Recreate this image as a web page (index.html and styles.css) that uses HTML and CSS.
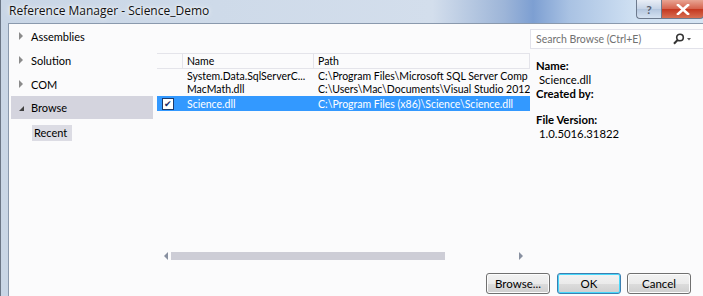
FILE: index.html
```html
<!DOCTYPE html>
<html lang="en">
<head>
    <meta charset="UTF-8">
    <title>Reference Manager - Science_Demo</title>
    <link rel="stylesheet" href="styles.css">
</head>
<body>
    <div class="window">
        <div class="titlebar">
            <span class="title">Reference Manager - Science_Demo</span>
            <div class="caption-buttons">
                <span class="cap help">?</span>
                <span class="cap close">
                    <svg width="14" height="11" viewBox="0 0 14 11">
                        <path d="M2 1 L12 10 M12 1 L2 10" stroke="#fff" stroke-width="2.6" stroke-linecap="square"/>
                    </svg>
                </span>
            </div>
        </div>

        <div class="frame">
            <div class="client">
                <!-- navigation -->
                <div class="nav">
                    <div class="nav-item"><span class="arrow closed"></span>Assemblies</div>
                    <div class="nav-item"><span class="arrow closed"></span>Solution</div>
                    <div class="nav-item"><span class="arrow closed"></span>COM</div>
                    <div class="nav-item selected"><span class="arrow open"></span>Browse</div>
                    <div class="nav-sub"><span class="recent">Recent</span></div>
                </div>

                <!-- list of references -->
                <div class="list-pane">
                    <div class="list">
                        <div class="row header">
                            <div class="cell check"></div>
                            <div class="cell name">Name</div>
                            <div class="cell path">Path</div>
                        </div>
                        <div class="row">
                            <div class="cell check"></div>
                            <div class="cell name">System.Data.SqlServerC...</div>
                            <div class="cell path">C:\Program Files\Microsoft SQL Server Comp</div>
                        </div>
                        <div class="row">
                            <div class="cell check"></div>
                            <div class="cell name">MacMath.dll</div>
                            <div class="cell path">C:\Users\Mac\Documents\Visual Studio 2012</div>
                        </div>
                        <div class="row selected">
                            <div class="cell check"><span class="checkbox">&#10004;</span></div>
                            <div class="cell name">Science.dll</div>
                            <div class="cell path">C:\Program Files (x86)\Science\Science.dll</div>
                        </div>
                    </div>
                    <div class="hscroll">
                        <span class="sarrow left"></span>
                        <div class="track"><div class="thumb"></div></div>
                        <span class="sarrow right"></span>
                    </div>
                </div>

                <!-- details -->
                <div class="details">
                    <div class="search">
                        <span class="search-text">Search Browse (Ctrl+E)</span>
                        <svg class="search-icon" width="20" height="12" viewBox="0 0 20 12">
                            <circle cx="8" cy="4.5" r="3.3" fill="none" stroke="#333" stroke-width="1.6"/>
                            <path d="M5.8 6.8 L2 10.8" stroke="#333" stroke-width="2"/>
                            <path d="M15 5 L19 5 L17 7.5 Z" fill="#555"/>
                        </svg>
                    </div>
                    <div class="info">
                        <div class="label">Name:</div>
                        <div class="value">Science.dll</div>
                        <div class="label">Created by:</div>
                        <div class="value empty"></div>
                        <div class="label">File Version:</div>
                        <div class="value">1.0.5016.31822</div>
                    </div>
                </div>
            </div>

            <div class="buttons">
                <button class="btn">Browse...</button>
                <button class="btn default">OK</button>
                <button class="btn">Cancel</button>
            </div>
        </div>
    </div>
</body>
</html>
```

FILE: styles.css
```css
* {
    box-sizing: border-box;
    margin: 0;
    padding: 0;
}

body {
    width: 703px;
    height: 296px;
    overflow: hidden;
    font-family: Lato, "Open Sans", sans-serif;
    font-size: 10.5px;
    color: #000;
    background: #fff;
}

.window {
    width: 720px;
    height: 296px;
    background: linear-gradient(90deg, #c9d6e6 0%, #d3deec 60%, #9db5d8 70%, #7d9fd2 74%, #a9c2e3 79%, #cfe0f2 88%, #d8e6f4 100%);
    border-left: 1px solid #6b7686;
}

.titlebar {
    height: 23px;
    display: flex;
    align-items: flex-start;
    justify-content: space-between;
    padding-left: 8px;
}

.title {
    font-family: "Open Sans", sans-serif;
    font-size: 12px;
    line-height: 22px;
    color: #111;
    text-shadow: 0 0 6px #fff, 0 0 3px #fff;
}

.caption-buttons {
    display: flex;
    margin-right: 16px;
}

.cap {
    height: 19px;
    display: flex;
    align-items: center;
    justify-content: center;
    border: 1px solid #6d7a8d;
    border-top: none;
}

.help {
    width: 25px;
    border-radius: 0 0 0 4px;
    border-right: none;
    background: linear-gradient(#e9eef6, #c5d3e6 50%, #b4c6de 51%, #d5e2f1);
    color: #5a6070;
    font-weight: bold;
    font-size: 12px;
}

.close {
    width: 43px;
    border-radius: 0 0 4px 0;
    background: linear-gradient(#e8a493, #d5614b 50%, #c4371f 51%, #d86f52);
}

.frame {
    margin-left: 7px;
    height: 273px;
    background: #fbfbfc;
    border-top: 1px solid #8a99ad;
    border-left: 1px solid #8a99ad;
    display: flex;
    flex-direction: column;
}

.client {
    display: flex;
    height: 244px;
}

/* nav */

.nav {
    width: 147px;
    padding: 0 2px;
}

.nav-item {
    height: 24px;
    display: flex;
    align-items: center;
    padding-left: 8px;
    font-size: 11px;
}

.nav-item.selected {
    background: #d4d4de;
    height: 23px;
}

.arrow {
    width: 0;
    height: 0;
    margin-right: 8px;
}

.arrow.closed {
    border-top: 4px solid transparent;
    border-bottom: 4px solid transparent;
    border-left: 4px solid #8b8b8b;
}

.arrow.open {
    border-left: 5px solid transparent;
    border-bottom: 5px solid #404040;
    margin-top: 2px;
    margin-right: 7px;
}

.nav-sub {
    padding: 6px 0 0 21px;
}

.recent {
    display: inline-block;
    background: #dcdce4;
    padding: 1px 5px 2px 2px;
    font-size: 11px;
    line-height: 13px;
}

/* list */

.list-pane {
    width: 375px;
    display: flex;
    flex-direction: column;
    justify-content: space-between;
    padding-top: 29px;
    padding-bottom: 6px;
}

.list {
    padding-left: 2px;
}

.row {
    display: flex;
    height: 13.5px;
    align-items: center;
    white-space: nowrap;
    overflow: hidden;
}

.row.header {
    height: 16px;
    border-top: 1px solid #e4e4ea;
    border-bottom: 1px solid #e4e4ea;
}

.row.selected {
    background: #3399ff;
    color: #fff;
    height: 15px;
}

.cell {
    padding-left: 4px;
    overflow: hidden;
}

.cell.check {
    width: 26px;
    padding-left: 5px;
    display: flex;
    align-items: center;
}

.cell.name {
    width: 131px;
}

.cell.path {
    flex: 1;
}

.header .cell {
    height: 100%;
    line-height: 14px;
    border-right: 1px solid #e4e4ea;
}

.checkbox {
    width: 12px;
    height: 12px;
    background: #fff;
    border: 1px solid #1d3a6a;
    color: #1d2e66;
    font-size: 9px;
    line-height: 10px;
    text-align: center;
}

.hscroll {
    display: flex;
    align-items: center;
    height: 12px;
    padding: 0 7px 0 9px;
}

.sarrow {
    width: 0;
    height: 0;
    border-top: 4px solid transparent;
    border-bottom: 4px solid transparent;
}

.sarrow.left {
    border-right: 4px solid #8890a0;
}

.sarrow.right {
    border-left: 4px solid #8890a0;
}

.track {
    flex: 1;
    padding: 0 3px;
}

.thumb {
    width: 274px;
    height: 8px;
    background: #cdcdd6;
}

/* details */

.details {
    flex: 1;
    padding-top: 5px;
    font-size: 11.3px;
}

.search {
    height: 20px;
    border: 1px solid #e2e2ea;
    background: #fff;
    display: flex;
    align-items: center;
    justify-content: space-between;
    padding-left: 5px;
    width: 190px;
}

.search-text {
    color: #717171;
    font-size: 10.5px;
}

.search-icon {
    margin-right: 27px;
}

.info {
    padding: 10px 0 0 6px;
    line-height: 14px;
}

.label {
    font-weight: bold;
}

.value {
    padding-left: 3px;
}

.value.empty {
    height: 12px;
}

/* buttons */

.buttons {
    display: flex;
    padding: 5px 0 0 477px;
}

.btn {
    width: 64px;
    height: 21px;
    font-family: inherit;
    font-size: 11.5px;
    border: 1px solid #707070;
    border-radius: 3px;
    background: linear-gradient(#f2f2f2 0%, #ebebeb 50%, #dddddd 51%, #cfcfcf 100%);
    box-shadow: inset 0 0 0 1px #fcfcfc;
    margin-right: 7px;
}

.btn.default {
    border-color: #3c7fb1;
    box-shadow: inset 0 0 0 1px #48d8fb;
    margin-right: 6px;
}
```
